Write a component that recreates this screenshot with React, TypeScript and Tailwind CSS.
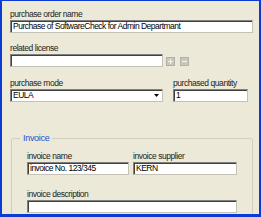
import React from "react";

// sunken XP-classic edit box
const boxCls =
  "h-[13px] bg-white border border-t-[#808080] border-l-[#808080] border-r-[#c4c1b6] border-b-[#c4c1b6] shadow-[inset_1px_1px_0_#404040] flex items-center pl-[2px] text-[8.5px] tracking-[-0.5px] leading-none text-black whitespace-nowrap overflow-hidden";

function Label({ children }: { children: React.ReactNode }) {
  return (
    <div className="h-[12px] text-[8.5px] tracking-[-0.45px] leading-[12px] text-[#222] whitespace-nowrap">
      {children}
    </div>
  );
}

function Field({ label, value, w }: { label: string; value?: string; w: string }) {
  return (
    <div className={w}>
      <Label>{label}</Label>
      <div className={boxCls}>{value}</div>
    </div>
  );
}

// small disabled +/- buttons
function MiniBtn({ plus }: { plus?: boolean }) {
  return (
    <div className="relative w-[9px] h-[9px] bg-[#c9c6bb] border border-[#b3b0a5]">
      <div className="absolute left-[1px] top-[3px] w-[5px] h-[1px] bg-[#f4f3ee]" />
      {plus && <div className="absolute left-[3px] top-[1px] w-[1px] h-[5px] bg-[#f4f3ee]" />}
    </div>
  );
}

export default function App() {
  return (
    <div
      className="w-[261px] h-[217px] overflow-hidden bg-[#ece9d8] border-t border-l-2 border-r-2 border-b-[3px] border-[#0b3bd1]"
      style={{ fontFamily: '"Liberation Sans", Arial, sans-serif' }}
    >
      <div className="pl-[8px] pt-[7px]">
        <Field label="purchase order name" value="Purchase of SoftwareCheck for Admin Departmant" w="w-[243px]" />

        {/* related license + add/remove */}
        <div className="mt-[9px]">
          <Label>related license</Label>
          <div className="flex items-center">
            <div className={boxCls + " w-[153px]"} />
            <div className="ml-[3px] mt-[1px] flex gap-[5px]">
              <MiniBtn plus />
              <MiniBtn />
            </div>
          </div>
        </div>

        {/* mode + quantity */}
        <div className="mt-[10px] flex gap-[10px]">
          <div className="w-[153px]">
            <Label>purchase mode</Label>
            <div className={boxCls + " justify-between pr-[3px]"}>
              <span>EULA</span>
              <svg width="5" height="3" viewBox="0 0 5 3">
                <path d="M0 0h5L2.5 3z" fill="#000" />
              </svg>
            </div>
          </div>
          <Field label="purchased quantity" value="1" w="w-[75px]" />
        </div>

        {/* Invoice group */}
        <fieldset className="mt-[31px] ml-[1px] w-[242px] h-[120px] border border-[#d0cebf] rounded-[3px]">
          <legend className="ml-[8px] px-[3px] text-[9px] tracking-[-0.3px] leading-[10px] text-[#1c4fd0]">Invoice</legend>
          <div className="pl-[15px]">
            <div className="mt-[7px] flex gap-[4px]">
              <Field label="invoice name" value="invoice No. 123/345" w="w-[102px]" />
              <Field label="invoice supplier" value="KERN" w="w-[104px]" />
            </div>
            <div className="mt-[13px]">
              <Field label="invoice description" w="w-[210px]" />
            </div>
          </div>
        </fieldset>
      </div>
    </div>
  );
}
